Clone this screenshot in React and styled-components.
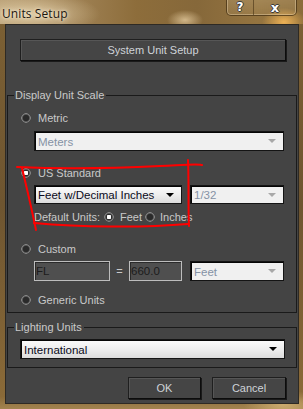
import React from "react";
import styled, { createGlobalStyle } from "styled-components";

const Global = createGlobalStyle`
  html, body { margin: 0; padding: 0; background: #6b5430; }
  body { width: 303px; height: 409px; overflow: hidden; }
  * { box-sizing: border-box; }
`;

const Window = styled.div`
  position: relative;
  width: 303px;
  height: 409px;
  display: flex;
  flex-direction: column;
  background:
    radial-gradient(ellipse 40px 14px at 283px 404px, rgba(255,220,150,0.5), transparent),
    linear-gradient(180deg, #7d6134 0%, #6e5530 50%, #8a6a38 97%, #a38450 100%);
  font-family: "Liberation Sans", Arial, sans-serif;
  font-size: 11px;
`;

const TitleBar = styled.div`
  position: relative;
  height: 24px;
  flex: none;
  background:
    radial-gradient(ellipse 22px 14px at 284px 22px, rgba(255,190,90,0.85), transparent),
    radial-gradient(ellipse 18px 10px at 185px 20px, rgba(240,215,170,0.7), transparent),
    radial-gradient(ellipse 70px 22px at 30px 14px, rgba(225,205,165,0.9), transparent),
    linear-gradient(90deg, #b49a70 0%, #a3865a 20%, #8d6d3b 45%, #86683a 65%, #947440 85%, #8b6c3a 100%);
  display: flex;
  align-items: flex-start;
`;

const Title = styled.div`
  margin: 5px 0 0 2px;
  font-family: "Open Sans", "DejaVu Sans", sans-serif;
  font-size: 12px;
  color: #1d1710;
  text-shadow: 0 0 6px rgba(255,245,225,0.9), 0 0 3px rgba(255,245,225,0.9);
  letter-spacing: 0.1px;
`;

const Caption = styled.div`
  position: absolute;
  top: -1px;
  right: 6px;
  display: flex;
  border: 1px solid rgba(70,50,20,0.75);
  border-top: none;
  border-radius: 0 0 5px 5px;
  box-shadow: inset 0 0 0 1px rgba(255,235,200,0.35);
  overflow: hidden;
`;

const CapBtn = styled.div`
  width: ${p => p.$w}px;
  height: 16px;
  display: flex;
  align-items: center;
  justify-content: center;
  font-family: "DejaVu Sans", sans-serif;
  font-weight: bold;
  font-size: ${p => p.$fs}px;
  color: #fff;
  text-shadow: 1px 0 0 #3a3a3a, -1px 0 0 #3a3a3a, 0 1px 0 #3a3a3a, 0 -1px 0 #3a3a3a;
  background: linear-gradient(180deg, rgba(255,240,210,0.15), rgba(255,240,210,0.05));
  & + & { border-left: 1px solid rgba(70,50,20,0.6); }
`;

const Client = styled.div`
  flex: 1;
  margin: 0 4px 5px 5px;
  background: #444444;
  border: 1px solid #2e2a24;
  display: flex;
  flex-direction: column;
  color: #c9c9c9;
`;

const Button = styled.button`
  font-family: "Liberation Sans", Arial, sans-serif;
  font-size: 11px;
  color: #cfd3d8;
  background: #454545;
  height: 22px;
  width: ${p => p.$w}px;
  border: 1px solid #1f1f1f;
  border-right-color: #0c0c0c;
  border-bottom-color: #0c0c0c;
  box-shadow: inset 1px 1px 0 #565656, 1px 1px 0 #1a1a1a;
  padding: 0;
`;

const TopRow = styled.div`
  display: flex;
  padding: 14px 0 0 14px;
`;

const Group = styled.fieldset`
  margin: ${p => p.$mt}px 1px 0 1px;
  padding: 0;
  border: 1px solid #1a1a1a;
  height: ${p => p.$h}px;
  display: flex;
  flex-direction: column;
`;

const Legend = styled.legend`
  margin-left: 6px;
  padding: 0 2px 0 1px;
  color: #cacaca;
  font-size: 11px;
  line-height: 12px;
`;

const RadioRow = styled.label`
  display: flex;
  align-items: center;
  height: 14px;
  margin: ${p => p.$mt}px 0 0 13px;
  gap: 7px;
`;

const Radio = styled.span`
  width: 10px;
  height: 10px;
  border-radius: 50%;
  flex: none;
  background: radial-gradient(circle at 50% 50%, ${p => (p.$on ? "#ffffff 0 1.6px, #dcdcdc 2.2px," : "")} #2a2a2a 0 2.8px, #5b5b5b 3.6px, #8a8a8a 4.6px, #444 5px);
`;

const Indent = styled.div`
  display: flex;
  align-items: center;
  margin: ${p => p.$mt}px 0 0 ${p => p.$ml ?? 26}px;
  gap: ${p => p.$gap ?? 8}px;
`;

const Select = styled.div`
  position: relative;
  width: ${p => p.$w}px;
  height: ${p => p.$h ?? 20}px;
  border: 1px solid #141414;
  box-shadow: inset 1px 1px 0 #050505;
  background: ${p => (p.$disabled ? "#f0f0f0" : "linear-gradient(180deg, #fbfbfb 0%, #eeeeee 50%, #dcdcdc 100%)")};
  color: ${p => (p.$disabled ? "#8592a5" : "#0a0a20")};
  font-size: 11.5px;
  display: flex;
  align-items: center;
  padding-left: 3px;
  padding-top: 1px;
  flex: none;
`;

const Arrow = styled.span`
  position: absolute;
  right: 7px;
  top: 50%;
  margin-top: -2px;
  width: 0;
  height: 0;
  border-left: 4px solid transparent;
  border-right: 4px solid transparent;
  border-top: 4px solid ${p => (p.$disabled ? "#a8a8a8" : "#000")};
`;

const TextField = styled.div`
  width: ${p => p.$w}px;
  height: 20px;
  border: 1px solid #bdbdbd;
  box-shadow: inset 1px 1px 0 #2a2a2a;
  background: #4f4f4f;
  color: #1c1c1c;
  font-size: 11.5px;
  display: flex;
  align-items: center;
  padding-left: 1px;
  flex: none;
`;

const Label = styled.span`
  white-space: nowrap;
  margin-left: ${p => p.$ml ?? 0}px;
  margin-right: ${p => p.$mr ?? 0}px;
`;

const Equals = styled.span`
  width: 19px;
  text-align: center;
`;

const Footer = styled.div`
  display: flex;
  justify-content: flex-end;
  gap: 11px;
  padding: 9px 12px 0 0;
`;

const Scribble = styled.svg`
  position: absolute;
  left: 0;
  top: 0;
  pointer-events: none;
`;

function SelectBox({ w, h, disabled, children }) {
  return (
    <Select $w={w} $h={h} $disabled={disabled}>
      {children}
      <Arrow $disabled={disabled} />
    </Select>
  );
}

export default function App() {
  return (
    <>
      <Global />
      <Window>
        <TitleBar>
          <Title>Units Setup</Title>
          <Caption>
            <CapBtn $w={26} $fs={12}>?</CapBtn>
            <CapBtn $w={43} $fs={13}>x</CapBtn>
          </Caption>
        </TitleBar>
        <Client>
          <TopRow>
            <Button $w={266}>System Unit Setup</Button>
          </TopRow>
          <Group $mt={28} $h={224}>
            <Legend>Display Unit Scale</Legend>
            <RadioRow $mt={10}>
              <Radio />
              <Label>Metric</Label>
            </RadioRow>
            <Indent $mt={6}>
              <SelectBox w={250} disabled>Meters</SelectBox>
            </Indent>
            <RadioRow $mt={15}>
              <Radio $on />
              <Label>US Standard</Label>
            </RadioRow>
            <Indent $mt={5}>
              <SelectBox w={148} h={19}>Feet w/Decimal Inches</SelectBox>
              <SelectBox w={94} h={19} disabled>1/32</SelectBox>
            </Indent>
            <Indent $mt={7} $gap={0}>
              <Label $mr={4}>Default Units:</Label>
              <Radio $on />
              <Label $ml={6} $mr={3}>Feet</Label>
              <Radio />
              <Label $ml={5}>Inches</Label>
            </Indent>
            <RadioRow $mt={19}>
              <Radio />
              <Label>Custom</Label>
            </RadioRow>
            <Indent $mt={5} $gap={0}>
              <TextField $w={76}>FL</TextField>
              <Equals>=</Equals>
              <TextField $w={53}>660.0</TextField>
              <Indent $mt={0} $ml={8}>
                <SelectBox w={94} disabled>Feet</SelectBox>
              </Indent>
            </Indent>
            <RadioRow $mt={12}>
              <Radio />
              <Label>Generic Units</Label>
            </RadioRow>
          </Group>
          <Group $mt={8} $h={47}>
            <Legend>Lighting Units</Legend>
            <Indent $mt={6} $ml={12}>
              <SelectBox w={265} h={20}>International</SelectBox>
            </Indent>
          </Group>
          <Footer>
            <Button $w={73}>OK</Button>
            <Button $w={74}>Cancel</Button>
          </Footer>
        </Client>
        <Scribble width="303" height="409" viewBox="0 0 303 409">
          <g fill="none" stroke="#ff0000" strokeWidth="2" strokeLinecap="round" strokeLinejoin="round">
            <path d="M17 167 C 60 169, 120 168, 160 166 S 195 164, 202 165" />
            <path d="M188 160 C 189 180, 188 205, 189 226" />
            <path d="M22 168 C 26 185, 31 205, 36 230" />
            <path d="M34 223 C 80 227, 140 228, 188 224" />
          </g>
        </Scribble>
      </Window>
    </>
  );
}
